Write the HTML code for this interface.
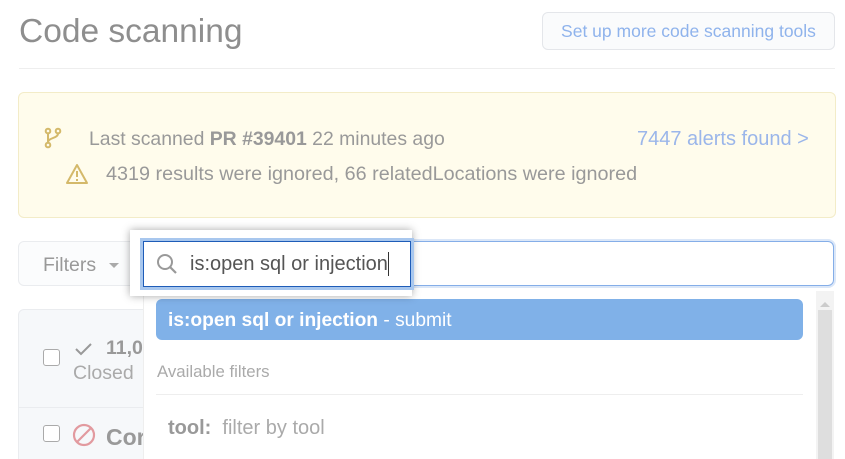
<!DOCTYPE html>
<html><head><meta charset="utf-8"><style>
*{box-sizing:border-box;margin:0;padding:0}
html,body{width:845px;height:459px;overflow:hidden}
body{background:#fff;font-family:"Liberation Sans",sans-serif;position:relative;color:#999}
.a{position:absolute;white-space:nowrap}
</style></head><body>
<div class="a" style="left:19px;top:13px;font-size:33.5px;color:#8e8e8e">Code scanning</div>
<div class="a" style="left:542px;top:12px;width:293px;height:38px;border:1px solid #e4e6ea;border-radius:6px;background:#fafbfc;color:#8fb3ec;font-size:17.5px;line-height:37px;text-align:center">Set up more code scanning tools</div>
<div class="a" style="left:19px;top:68px;width:816px;height:1px;background:#eee"></div>

<div class="a" style="left:18px;top:92px;width:818px;height:126px;background:#fffcec;border:1px solid #f3ecc8;border-radius:6px"></div>
<svg class="a" style="left:44px;top:127px" width="18" height="22" viewBox="0 0 18 22"><g fill="none" stroke="#d4b96a" stroke-width="2"><circle cx="4" cy="4" r="2.3"/><circle cx="14" cy="4" r="2.3"/><circle cx="4" cy="18" r="2.3"/><path d="M4 6.5v9M14 6.5c0 5-10 4-10 9"/></g></svg>
<div class="a" style="left:89px;top:128px;font-size:19.4px;color:#999">Last scanned <b style="color:#999">PR #39401</b> 22 minutes ago</div>
<div class="a" style="left:637px;top:128px;font-size:20px;color:#9bb6ea">7447 alerts found &gt;</div>
<svg class="a" style="left:65px;top:163px" width="24" height="22" viewBox="0 0 24 22"><path d="M12 2L22 20H2Z" fill="none" stroke="#d4b96a" stroke-width="2" stroke-linejoin="round"/><path d="M12 8v6M12 16v2" stroke="#d4b96a" stroke-width="2"/></svg>
<div class="a" style="left:106px;top:163px;font-size:19.8px;color:#999">4319 results were ignored, 66 relatedLocations were ignored</div>

<div class="a" style="left:18px;top:241px;width:130px;height:45px;border:1px solid #eaecef;border-radius:6px;background:#fbfcfd"></div>
<div class="a" style="left:43px;top:254px;font-size:19.5px;color:#999">Filters</div>
<div class="a" style="left:109px;top:263px;border:5px solid transparent;border-top-color:#aaa"></div>

<div class="a" style="left:18px;top:309px;width:140px;height:170px;border:1px solid #eaecef;border-radius:6px;background:#f6f8fa"></div>
<div class="a" style="left:18px;top:407px;width:130px;height:1px;background:#eaecef"></div>
<div class="a" style="left:43px;top:349px;width:17px;height:17px;border:1.5px solid #aaa;border-radius:3px;background:#fff"></div>
<svg class="a" style="left:74px;top:341px" width="20" height="16"><path d="M2 8l5 5L17 3" fill="none" stroke="#999" stroke-width="2"/></svg>
<div class="a" style="left:106px;top:337px;font-size:19.5px;font-weight:bold;color:#999">11,08</div>
<div class="a" style="left:73px;top:362px;font-size:19.5px;color:#aaa">Closed</div>
<div class="a" style="left:43px;top:425px;width:17px;height:17px;border:1.5px solid #aaa;border-radius:3px;background:#fff"></div>
<svg class="a" style="left:72px;top:423px" width="24" height="24"><circle cx="12" cy="12" r="10" fill="none" stroke="#e29a9f" stroke-width="2.2"/><path d="M5 19L19 5" stroke="#e29a9f" stroke-width="2.2"/></svg>
<div class="a" style="left:106px;top:424px;font-size:23px;font-weight:bold;color:#999">Cor</div>

<div class="a" style="left:143px;top:286px;width:692px;height:180px;background:#fff;border-left:1px solid #eee"></div>
<div class="a" style="left:816px;top:291px;width:18px;height:168px;background:#f3f3f3"></div>
<div class="a" style="left:818px;top:310px;width:14px;height:149px;background:#dedede"></div>
<div class="a" style="left:820px;top:297px;border:5px solid transparent;border-bottom-color:#ccc"></div>
<div class="a" style="left:156px;top:299px;width:647px;height:41px;background:#80b1e8;border-radius:6px"></div>
<div class="a" style="left:168px;top:310px;font-size:19.2px;color:#fff"><b>is:open sql or injection</b> - submit</div>
<div class="a" style="left:157px;top:362px;font-size:16.8px;color:#aaa">Available filters</div>
<div class="a" style="left:156px;top:394px;width:647px;height:1px;background:#eee"></div>
<div class="a" style="left:168px;top:417px;font-size:20px;color:#aaa"><b style="color:#999">tool:</b>&nbsp; filter by tool</div>

<div class="a" style="left:140px;top:239px;width:696px;height:49px;border:2px solid #dbe7f8;border-radius:8px"></div>
<div class="a" style="left:142px;top:241px;width:692px;height:45px;border:1px solid #85aee8;border-radius:6px;background:#fff"></div>

<div class="a" style="left:130px;top:230px;width:282px;height:66px;background:#fff;box-shadow:0 0 8px rgba(0,0,0,.35)"></div>
<div class="a" style="left:143px;top:241px;width:268px;height:46px;border:1px solid #1e5cb8;box-shadow:0 0 0 3px #a8c7ee;background:#fff"></div>
<svg class="a" style="left:155px;top:252px" width="24" height="24"><circle cx="10" cy="10" r="7" fill="none" stroke="#999" stroke-width="2"/><path d="M15 15l6 6" stroke="#999" stroke-width="2.2"/></svg>
<div class="a" style="left:190px;top:253px;font-size:20px;color:#555">is:open sql or injection</div>
<div class="a" style="left:388px;top:252px;width:1px;height:24px;background:#333"></div>
</body></html>
